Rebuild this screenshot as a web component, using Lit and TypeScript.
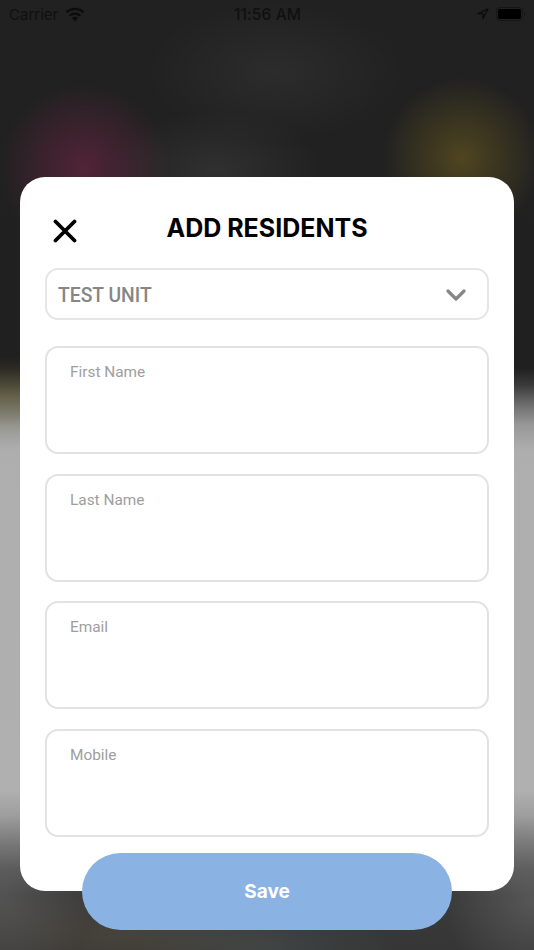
import { LitElement, html, css } from "lit";
import { customElement } from "lit/decorators.js";

const FIELDS = ["First Name", "Last Name", "Email", "Mobile"];

@customElement("app-root")
export class AppRoot extends LitElement {
  static styles = css`
    :host {
      display: block;
      width: 534px;
      height: 950px;
      overflow: hidden;
      font-family: "Roboto", "Liberation Sans", sans-serif;
      background:
        radial-gradient(circle 85px at 84px 168px, rgba(130, 38, 78, 0.5), rgba(130, 38, 78, 0.26) 50%, rgba(130, 38, 78, 0) 100%),
        radial-gradient(circle 80px at 462px 158px, rgba(125, 105, 30, 0.5), rgba(125, 105, 30, 0.26) 50%, rgba(125, 105, 30, 0) 100%),
        radial-gradient(ellipse 130px 70px at 275px 72px, rgba(255, 255, 255, 0.05), rgba(255, 255, 255, 0) 100%),
        radial-gradient(ellipse 110px 60px at 215px 170px, rgba(255, 255, 255, 0.07), rgba(255, 255, 255, 0) 100%),
        radial-gradient(ellipse 240px 40px at 0 396px, rgba(120, 110, 50, 0.4), rgba(120, 110, 50, 0) 100%),
        radial-gradient(ellipse 170px 50px at 130px 935px, rgba(110, 95, 70, 0.3), rgba(110, 95, 70, 0) 100%),
        radial-gradient(ellipse 130px 45px at 265px 950px, rgba(80, 100, 100, 0.3), rgba(80, 100, 100, 0) 100%),
        radial-gradient(ellipse 90px 90px at 0 900px, rgba(255, 255, 255, 0.13), rgba(255, 255, 255, 0) 100%),
        radial-gradient(ellipse 90px 90px at 534px 900px, rgba(255, 255, 255, 0.15), rgba(255, 255, 255, 0) 100%),
        linear-gradient(
          180deg,
          #212121 0,
          #202020 368px,
          #3a3a3a 385px,
          #6e6e6e 405px,
          #989898 425px,
          #aeaeae 450px,
          #b0b0b0 790px,
          #9e9e9e 815px,
          #777 840px,
          #4c4c4c 870px,
          #3a3a3a 895px,
          #363636 950px
        );
    }
    .screen {
      height: 100%;
      display: flex;
      flex-direction: column;
    }
    .status {
      height: 28px;
      flex: none;
      display: grid;
      grid-template-columns: 1fr auto 1fr;
      align-items: center;
      padding: 0 8px 0 9px;
      color: #101010;
      font-family: "Inter", "Liberation Sans", sans-serif;
      font-size: 15px;
    }
    .status-left {
      display: flex;
      align-items: center;
      gap: 7px;
    }
    .status-right {
      display: flex;
      justify-content: flex-end;
      align-items: center;
      gap: 7px;
    }
    .time {
      font-size: 15.5px;
      font-weight: 500;
      letter-spacing: 0.1px;
    }
    .battery {
      display: block;
    }
    .card {
      margin: 149px 19.6px 0;
      height: 714px;
      flex: none;
      box-sizing: border-box;
      background: #fff;
      border-radius: 25px;
      padding: 0 25.4px;
      display: flex;
      flex-direction: column;
    }
    .head {
      height: 91px;
      flex: none;
      position: relative;
      display: flex;
      justify-content: center;
      padding-top: 36px;
      box-sizing: border-box;
    }
    .close {
      position: absolute;
      left: 8px;
      top: 42px;
      display: block;
    }
    h1 {
      margin: 0;
      font-family: "Inter", "Liberation Sans", sans-serif;
      font-size: 25px;
      line-height: 30px;
      font-weight: 700;
      color: #000;
    }
    .select {
      height: 52px;
      flex: none;
      box-sizing: border-box;
      border: 2px solid #e6e6e6;
      border-radius: 13px;
      display: flex;
      align-items: center;
      justify-content: space-between;
      padding: 2px 21px 0 11px;
      color: #868686;
      font-size: 19.3px;
      font-weight: 500;
    }
    .fields {
      margin-top: 26px;
      display: flex;
      flex-direction: column;
      gap: 19.7px;
    }
    textarea {
      display: block;
      width: 100%;
      height: 108px;
      box-sizing: border-box;
      border: 2px solid #e2e2e2;
      border-radius: 13px;
      padding: 14px 23px;
      margin: 0;
      resize: none;
      outline: none;
      background: #fff;
      font-family: inherit;
      font-size: 15.4px;
      line-height: 21px;
    }
    textarea::placeholder {
      color: #9e9e9e;
      opacity: 1;
    }
    .save {
      align-self: center;
      flex: none;
      width: 370px;
      height: 77px;
      margin-top: -38px;
      position: relative;
      border: none;
      border-radius: 38.5px;
      background: #8ab3e3;
      color: #fff;
      font-family: "Inter", "Liberation Sans", sans-serif;
      font-size: 19px;
      font-weight: 700;
    }
  `;

  render() {
    return html`
      <div class="screen">
        <div class="status">
          <div class="status-left">
            <span>Carrier</span>
            <svg width="20" height="15" viewBox="0 0 20 15" aria-hidden="true">
              <path d="M10 14.5l-3-3.4a4.6 4.6 0 0 1 6 0z" fill="#0c0c0c"/>
              <path d="M4.6 8.7a8 8 0 0 1 10.8 0" fill="none" stroke="#0c0c0c" stroke-width="2.2"/>
              <path d="M1.4 5.2a12.6 12.6 0 0 1 17.2 0" fill="none" stroke="#0c0c0c" stroke-width="2.2"/>
            </svg>
          </div>
          <div class="time">11:56 AM</div>
          <div class="status-right">
            <svg width="12" height="12" viewBox="0 0 12 12" aria-hidden="true">
              <path d="M11 1L1 5.6h4.9V10.6z" fill="none" stroke="#0c0c0c" stroke-width="1.3" stroke-linejoin="round"/>
            </svg>
            <svg class="battery" width="30" height="14" viewBox="0 0 30 14" aria-hidden="true">
              <rect x="0.5" y="0.5" width="26" height="13" rx="3.5" fill="none" stroke="#161616" stroke-width="1"/>
              <rect x="2" y="2" width="23" height="10" rx="2" fill="#000"/>
              <path d="M28 5v4a2 2 0 0 0 1.2-2 2 2 0 0 0-1.2-2z" fill="#161616"/>
            </svg>
          </div>
        </div>

        <div class="card">
          <div class="head">
            <svg class="close" width="24" height="24" viewBox="0 0 24 24" aria-label="Close">
              <path d="M2.5 2.5L21.5 21.5M21.5 2.5L2.5 21.5" fill="none" stroke="#000" stroke-width="3.8" stroke-linecap="round"/>
            </svg>
            <h1>ADD RESIDENTS</h1>
          </div>
          <div class="select">
            <span>TEST UNIT</span>
            <svg width="20" height="12" viewBox="0 0 20 12" aria-hidden="true">
              <path d="M2 2l8 8 8-8" fill="none" stroke="#868686" stroke-width="3.2" stroke-linecap="round" stroke-linejoin="round"/>
            </svg>
          </div>
          <div class="fields">
            ${FIELDS.map((f) => html`<textarea placeholder=${f}></textarea>`)}
          </div>
        </div>

        <button class="save">Save</button>
      </div>
    `;
  }
}
